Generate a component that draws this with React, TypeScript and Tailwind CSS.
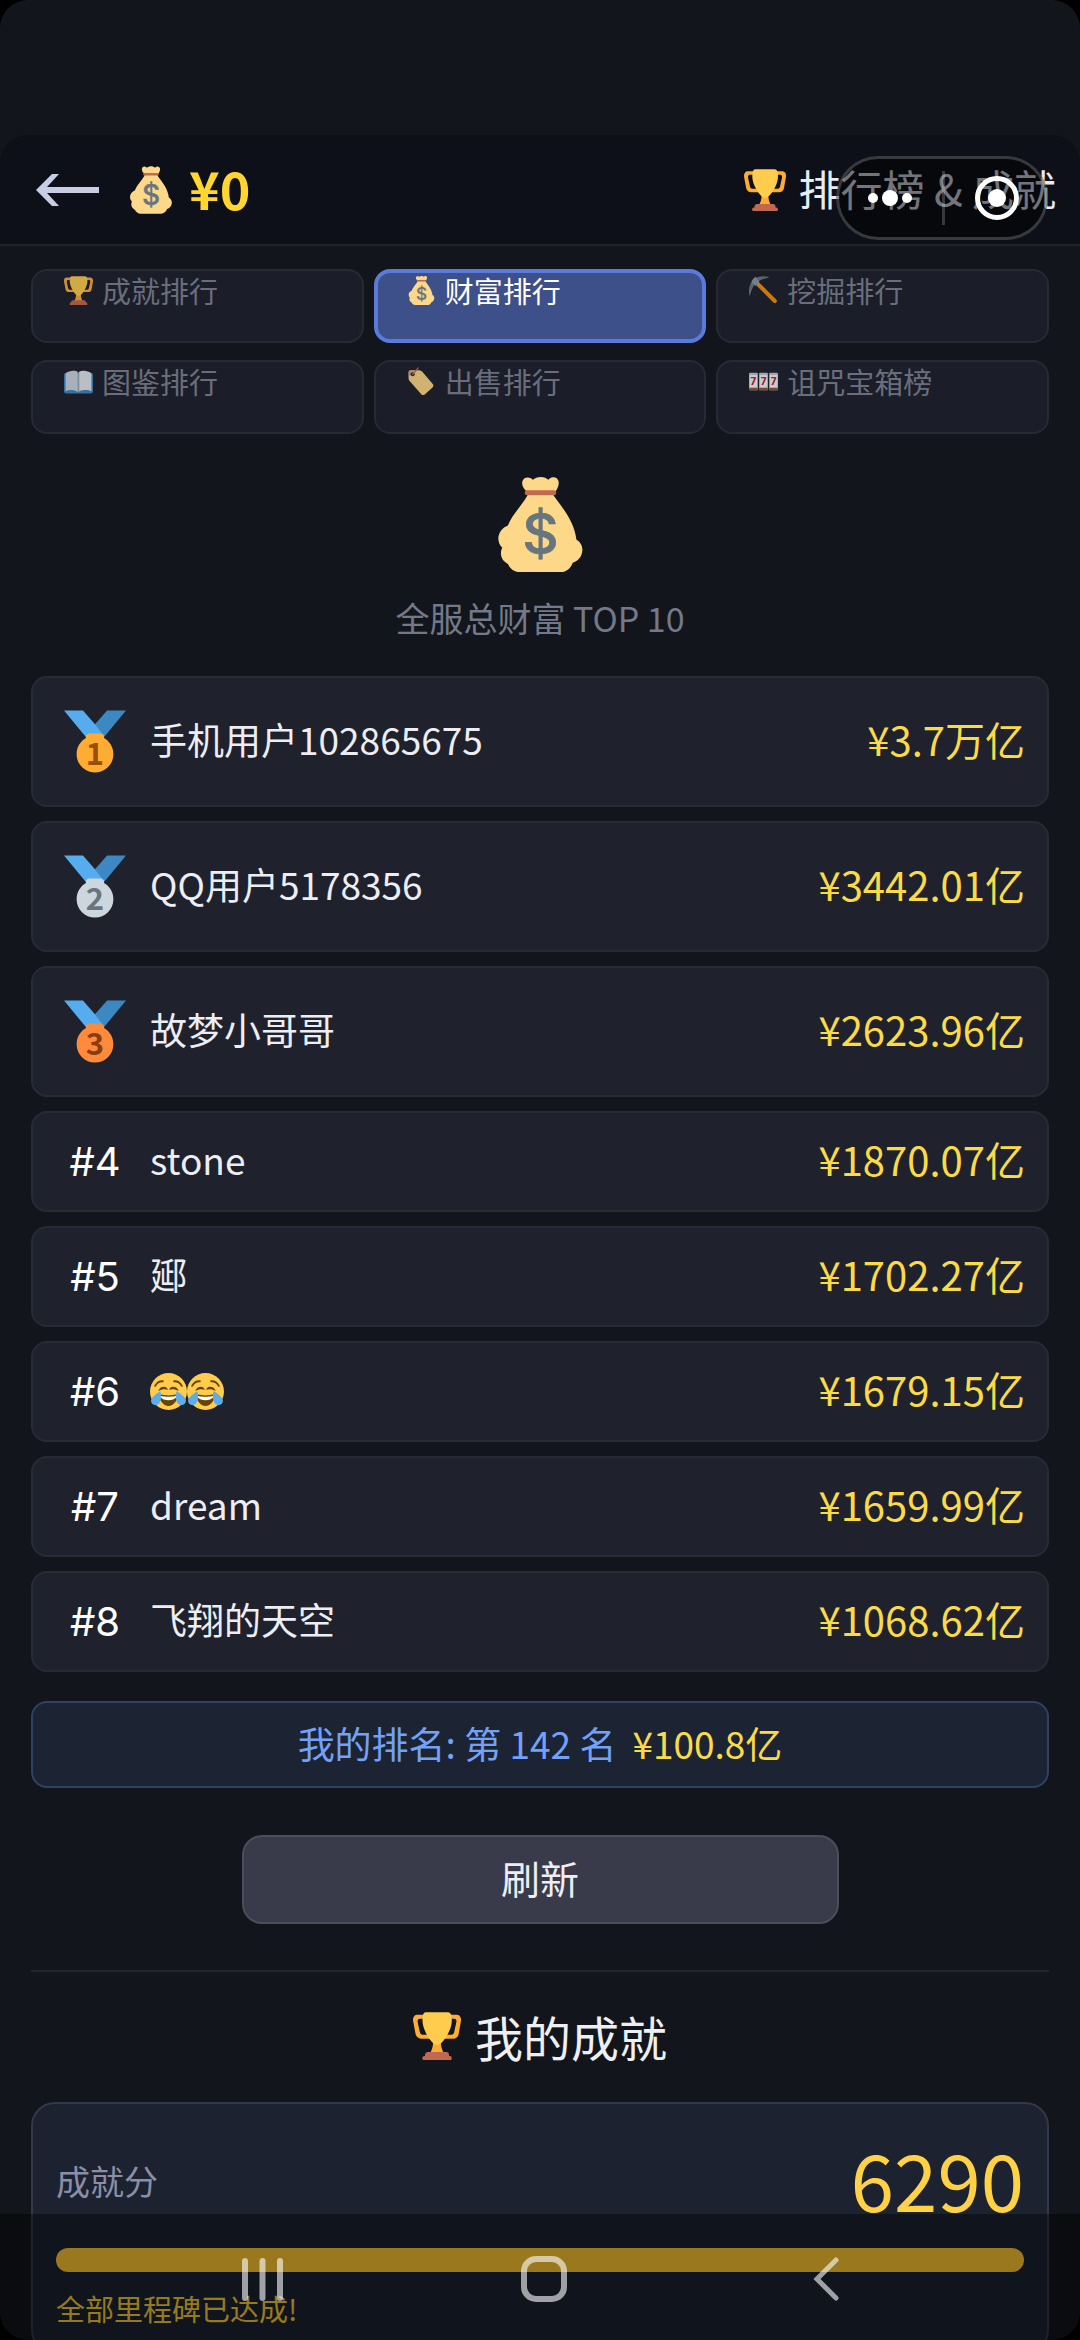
import type { ReactNode } from "react"
import { useState } from "react"
import clsx from "clsx"

type IconProps = { className?: string }

function Trophy({ className }: IconProps) {
  return (
    <svg viewBox="0 0 36 36" className={className} aria-hidden="true">
      <path fill="#FFAC33" d="M5.123 5h6C12.227 5 13 4.896 13 6V4c0-1.104-.773-2-1.877-2h-8c-2 0-3.583 2.125-3 5 0 0 1.791 9.375 1.917 9.958C2.373 18.5 4.164 20 6.081 20h6.958c1.105 0-.039-1.896-.039-3v-2c0 1.104-.773 2-1.877 2h-4c-1.104 0-1.833-1.042-2-2S3.539 7.667 3.539 7.667C3.206 5.75 4.018 5 5.123 5zm25.812 0h-6C23.831 5 22 4.896 22 6V4c0-1.104 1.831-2 2.935-2h8c2 0 3.584 2.125 3 5 0 0-1.633 9.419-1.771 10-.354 1.5-2.042 3-4 3h-7.146C21.914 20 22 18.104 22 17v-2c0 1.104 1.831 2 2.935 2h4c1.104 0 1.834-1.042 2-2s1.584-7.333 1.584-7.333C32.851 5.75 32.04 5 30.935 5z" />
      <path fill="#FFAC33" d="M20.832 22c0-6.958-2.709 0-2.709 0s-3-6.958-3 0-3.291 10-3.291 10h12.292c-.001 0-3.292-3.042-3.292-10z" />
      <path fill="#FFCC4D" d="M29.123 6.577c0 6.775-6.77 18.192-11 18.192-4.231 0-11-11.417-11-18.192 0-5.195 1-6.319 3-6.319 1.374 0 6.025-.027 8-.027l7-.001c2.917-.001 4 .684 4 6.347z" />
      <path fill="#C1694F" d="M27 33c0 1.104.227 2-.877 2h-16C9.018 35 9 34.104 9 33v-1c0-1.104 1.164-2 2.206-2h13.917c1.042 0 1.877.896 1.877 2v1z" />
      <path fill="#C1694F" d="M29 34.625c0 .76.165 1.375-1.252 1.375H8.498C7.206 36 7 35.385 7 34.625v-.25C7 33.615 7.738 33 8.498 33h19.25c.759 0 1.252.615 1.252 1.375v.25z" />
    </svg>
  )
}

function MoneyBag({ className }: IconProps) {
  return (
    <svg viewBox="0 0 254 286" className={className} aria-hidden="true">
      <path fill="#FDD888" d="M84 42C74 34 71 24 72 15C74 4 84 0 92 2C98 3 102 6 104 8C110 4 118 0 128 0S145 4 151 8C154 5 158 2 164 1C173 0 181 6 182 16C182 26 179 34 173 42L166 55C190 90 228 130 235 188C246 195 254 206 253 221C252 240 240 252 224 258C218 275 205 286 188 286H64C48 286 36 276 29 262C14 254 7 242 8 228C8 222 10 217 12 213C4 206 0 196 0 184C1 168 12 152 29 146C40 115 72 85 88 55Z" />
      <rect x="80" y="40" width="94" height="15" rx="6" fill="#C1694F" />
      <text x="127" y="232" textAnchor="middle" fontSize="170" fontWeight="500" fill="#67757F" stroke="#67757F" strokeWidth="2" strokeLinejoin="round" className="font-[Inter,sans-serif]">
        $
      </text>
    </svg>
  )
}

function Pickaxe({ className }: IconProps) {
  return (
    <svg viewBox="0 0 36 36" className={className} aria-hidden="true">
      <path d="M7 6L32 31" stroke="#F4900C" strokeWidth="5" strokeLinecap="round" />
      <path fill="#66757F" d="M0 25C-1 16 1 9 5 5S15-1 25 1C24 3 20 3 17 4L10 7L9 11L6 12C3 16 3 21 0 25Z" />
      <path fill="#8899A6" d="M4 5L8 1L13 7L8 12L3 8Z" />
    </svg>
  )
}

function OpenBook({ className }: IconProps) {
  return (
    <svg viewBox="0 0 36 36" className={className} aria-hidden="true">
      <rect y="7" width="36" height="26" rx="3" fill="#3B88C3" />
      <path fill="#CCD6DD" d="M2 8C6 4 14 4 17 6V31C13 28 6 28 2 30Z" />
      <path fill="#E1E8ED" d="M34 8C30 4 22 4 19 6L17 9V31C22 28 30 28 34 30Z" />
      <path fill="#99AAB5" d="M17 7H19V31H17Z" />
    </svg>
  )
}

function PriceTag({ className }: IconProps) {
  return (
    <svg viewBox="0 0 36 36" className={className} aria-hidden="true">
      <path fill="#FFD983" d="M2 7C2 5 3 4 5 4L15 4C17 4 18 5 19 6L32 21C33 22 33 24 32 25L22 34C21 35 19 35 18 34L3 17C2 16 2 15 2 13Z" />
      <path fill="#D99E82" d="M2 12V6C2 5 3 4 4 4H10Z" />
      <circle cx="7" cy="9" r="2.6" fill="#292F33" />
      <path d="M7 9L14 1" stroke="#C1694F" strokeWidth="1.5" strokeLinecap="round" />
    </svg>
  )
}

function SlotReels({ className }: IconProps) {
  return (
    <svg viewBox="0 0 36 36" className={className} aria-hidden="true">
      {[0, 12.5, 25].map((x) => (
        <g key={x}>
          <rect x={x} y="7" width="11" height="22" rx="1.5" fill="#C9C3D6" />
          <rect x={x} y="26" width="11" height="3" rx="1" fill="#8A5A35" />
          <rect x={x + 1} y="10" width="9" height="15" fill="#F5F8FA" />
          <text x={x + 5.5} y="22" textAnchor="middle" fontSize="12" fontWeight="800" fill="#BE1931" className="font-[Inter,sans-serif]">
            7
          </text>
        </g>
      ))}
    </svg>
  )
}

function Joy({ className }: IconProps) {
  return (
    <svg viewBox="0 0 36 36" className={className} aria-hidden="true">
      <circle cx="18" cy="18" r="18" fill="#FFCC4D" />
      <path fill="#664500" d="M18 21.8c-3 0-5-.3-7.4-.8-.6-.1-1.6 0-1.6 1.6 0 3.3 3.8 9.4 9 9.4s9-6.1 9-9.4c0-1.6-1-1.7-1.6-1.6-2.4.5-4.4.8-7.4.8z" />
      <path fill="#FFF" d="M10 22.2S13 23.200 18 23.200s8-1 8-1-.5 4.300-8 4.300-8-4.300-8-4.300z" />
      <path fill="#664500" d="M8 17.500C9 14.700 11 13.300 13.500 13.300S17 15 17.300 16.500C15.500 15.600 12 15.300 8 17.500zM28 17.500C27 14.700 25 13.300 22.500 13.300S19 15 18.700 16.500C20.500 15.600 24 15.300 28 17.500z" />
      <path fill="none" stroke="#664500" strokeWidth="1.8" strokeLinecap="round" d="M5 12.500C6.500 9.800 9.500 7.800 12.500 8M31 12.500C29.500 9.800 26.500 7.800 23.500 8" />
      <path fill="#5DADEC" d="M10 17.500C11.500 22 11 28 8 30.500C5 32.500 1 30.500 1 27C1 23.500 6 20.500 10 17.500zM26 17.500C24.500 22 25 28 28 30.500C31 32.500 35 30.500 35 27C35 23.500 30 20.500 26 17.500z" />
    </svg>
  )
}

const medalColors = [
  { disc: "#FFAC33", digit: "#9A4E00" },
  { disc: "#CCD6DD", digit: "#66757F" },
  { disc: "#FF8A3B", digit: "#873E10" },
]

function Medal({ place, className }: IconProps & { place: number }) {
  const { disc, digit } = medalColors[place - 1]
  return (
    <svg viewBox="0 0 36 36" className={className} role="img" aria-label={`第${place}名`}>
      <path fill="#55ACEE" d="M18 8l-7-8H0l14 17 11.521-4.75z" />
      <path fill="#3B88C3" d="M25 0l-7 8 5.39 7.312 1.227-1.489L36 0z" />
      <path fill={disc} d="M23.205 16.026c.08-.217.131-.448.131-.693 0-1.104-.896-2-2-2h-6.667c-1.105 0-2 .896-2 2 0 .245.05.476.131.693-3.258 1.826-5.464 5.307-5.464 9.307C7.335 31.224 12.111 36 18.002 36s10.667-4.776 10.667-10.667c0-4-2.206-7.481-5.464-9.307z" />
      <text x="18" y="31.5" textAnchor="middle" fontSize="18" fontWeight="700" fill={digit} className="font-[Noto_Sans_CJK_SC,sans-serif]">
        {place}
      </text>
    </svg>
  )
}

const tabs = [
  { id: "achievement", label: "成就排行", Icon: Trophy },
  { id: "wealth", label: "财富排行", Icon: MoneyBag },
  { id: "dig", label: "挖掘排行", Icon: Pickaxe },
  { id: "book", label: "图鉴排行", Icon: OpenBook },
  { id: "sale", label: "出售排行", Icon: PriceTag },
  { id: "curse", label: "诅咒宝箱榜", Icon: SlotReels },
]

const players: { name: ReactNode; amount: string }[] = [
  { name: "手机用户102865675", amount: "¥3.7万亿" },
  { name: "QQ用户5178356", amount: "¥3442.01亿" },
  { name: "故梦小哥哥", amount: "¥2623.96亿" },
  { name: "stone", amount: "¥1870.07亿" },
  { name: "郔", amount: "¥1702.27亿" },
  {
    name: (
      <span className="flex pt-1" role="img" aria-label="😂😂">
        <Joy className="size-[37px]" />
        <Joy className="size-[37px]" />
      </span>
    ),
    amount: "¥1679.15亿",
  },
  { name: "dream", amount: "¥1659.99亿" },
  { name: "飞翔的天空", amount: "¥1068.62亿" },
]

function Header() {
  return (
    <header className="flex items-center justify-between rounded-t-[28px] border-b-2 border-[#20232b] bg-[#0d1019] pr-6 pl-9">
      <div className="flex h-[109px] items-center">
        <button type="button" aria-label="返回" className="mr-[30px]">
          <svg viewBox="0 0 64 34" className="h-[34px] w-16" fill="#C7CEE3">
            <path d="M0 17L16 1H23L11 14H63V20H11L23 33H16Z" />
          </svg>
        </button>
        <MoneyBag className="mr-[17px] h-12 w-[42px]" />
        <span className="pb-1 text-[52px] leading-[60px] font-bold text-[#ffd52e]">¥0</span>
      </div>
      <h1 className="flex items-center gap-[13px] text-[42px] leading-[60px] text-[#e9ebf4]">
        <Trophy className="size-[42px]" />
        <span className="pb-1">排行榜 &amp; 成就</span>
      </h1>
    </header>
  )
}

// Host app capsule, floats over the page title
function Capsule() {
  return (
    <div className="absolute top-[156px] right-8 z-10 flex h-[84px] w-[212px] items-center justify-between rounded-full border-3 border-white/20 bg-black/50 pr-[26px] pl-[29px]">
      <button type="button" aria-label="更多" className="flex items-center gap-1">
        <span className="size-[10px] rounded-full bg-white" />
        <span className="size-4 rounded-full bg-white" />
        <span className="size-[10px] rounded-full bg-white" />
      </button>
      <span className="h-[54px] w-[3px] bg-white/20" />
      <button type="button" aria-label="关闭" className="flex size-11 items-center justify-center rounded-full border-5 border-white">
        <span className="size-[18px] rounded-full bg-white" />
      </button>
    </div>
  )
}

function SystemNav() {
  return (
    <nav className="absolute inset-x-0 bottom-0 z-10 h-[126px] bg-black/40 pt-[42px]">
      <div className="grid grid-cols-[1fr_46px_1fr] text-white/60">
        <button type="button" aria-label="最近任务" className="ml-[241px] w-11">
          <svg viewBox="0 0 44 46" className="h-[46px] w-11" fill="none" stroke="currentColor" strokeWidth="6" strokeLinecap="round">
            <path d="M4 5V42M21.5 5V42M39 5V42" />
          </svg>
        </button>
        <button type="button" aria-label="主屏幕" className="ml-1">
          <svg viewBox="0 0 46 46" className="size-[46px]" fill="none" stroke="currentColor" strokeWidth="6">
            <rect x="3" y="3" width="40" height="40" rx="12" />
          </svg>
        </button>
        <button type="button" aria-label="返回上一页" className="mr-60 ml-auto w-7">
          <svg viewBox="0 0 28 46" className="h-[46px] w-7" fill="none" stroke="currentColor" strokeWidth="5" strokeLinecap="round">
            <path d="M24 4L5 23L24 42" />
          </svg>
        </button>
      </div>
    </nav>
  )
}

export default function App() {
  const [active, setActive] = useState("wealth")

  return (
    <div className="h-screen bg-black font-[Noto_Sans_CJK_SC,sans-serif]">
      <div className="relative h-full overflow-hidden rounded-[28px] bg-[#12151b] pt-[135px]">
        <Header />
        <Capsule />

        <main className="flex flex-col px-[31px] pt-[23px]">
          <div className="grid grid-cols-3 gap-x-[10px] gap-y-[17px]">
            {tabs.map(({ id, label, Icon }) => {
              const selected = id === active
              return (
                <button
                  key={id}
                  type="button"
                  aria-pressed={selected}
                  onClick={() => setActive(id)}
                  className={clsx(
                    "flex h-[74px] items-start rounded-2xl text-[29px]",
                    selected
                      ? "border-4 border-[#5b7bda] bg-[#3d5089] px-[29px] leading-[34px] text-white"
                      : "border-2 border-[#262a34] bg-[#1b1e29] px-[31px] leading-[38px] text-[#6a6e7c]"
                  )}
                >
                  <span className="flex items-center gap-[9px]">
                    <span className={clsx("flex w-[29px] justify-center", !selected && "opacity-80")}>
                      <Icon className="size-[29px]" />
                    </span>
                    {label}
                  </span>
                </button>
              )
            })}
          </div>

          <MoneyBag className="mt-[43px] h-[95px] w-[85px] self-center" />
          <h2 className="mt-[22px] text-center text-[34px] leading-[48px] text-[#737988]">全服总财富 TOP 10</h2>

          <ol className="mt-[34px] flex flex-col gap-[14px]">
            {players.map(({ name, amount }, i) => (
              <li
                key={amount}
                className="flex items-center gap-6 rounded-2xl border-2 border-[#272b35] bg-[#1f222d] py-6 pr-[22px] pl-[31px]"
              >
                <span className="flex w-[62px] shrink-0 justify-center font-[Inter,sans-serif] text-[40px] leading-[49px] text-white">
                  {i < 3 ? <Medal place={i + 1} className="my-2 size-[63px]" /> : `#${i + 1}`}
                </span>
                <span className="flex-1 pb-1 text-[37px] leading-[45px] text-[#eceef3]">{name}</span>
                <span className="pb-1 text-[40px] leading-[45px] text-[#fbdb45]">{amount}</span>
              </li>
            ))}
          </ol>

          <p className="mt-[29px] flex justify-center gap-4 rounded-2xl border-2 border-[#2f4263] bg-[#1c2434] pt-[15px] pb-[17px] text-[37px] leading-[51px] text-[#73a1f7]">
            <span>我的排名: 第 142 名</span>
            <span className="text-[#fbdb45]">¥100.8亿</span>
          </p>

          <button
            type="button"
            className="mt-[47px] w-[597px] self-center rounded-[20px] border-2 border-[#4a4d5a] bg-[#393b4a] pt-4 pb-5 text-[39px] leading-[49px] text-[#eceef3]"
          >
            刷新
          </button>

          <section className="mt-[46px] border-t-2 border-[#23262e] pt-8">
            <h2 className="flex items-center justify-center gap-[14px] text-5xl leading-[64px] text-[#eeeff2]">
              <Trophy className="size-12" />
              我的成就
            </h2>
            <div className="mt-[34px] rounded-3xl border-2 border-[#323848] bg-[#1c2230] px-[23px] pt-7 pb-6">
              <div className="flex items-center justify-between">
                <span id="score-label" className="pt-1 text-[34px] text-[#8a8fa5]">
                  成就分
                </span>
                <span className="text-[78px] leading-[92px] text-[#ffd246]">6290</span>
              </div>
              <div
                role="progressbar"
                aria-labelledby="score-label"
                aria-valuenow={100}
                className="mt-6 h-6 rounded-full bg-[#ffc832]"
              />
              <p className="mt-4 text-[29px] leading-10 text-[#facc33]">全部里程碑已达成!</p>
            </div>
          </section>
        </main>

        <SystemNav />
      </div>
    </div>
  )
}
